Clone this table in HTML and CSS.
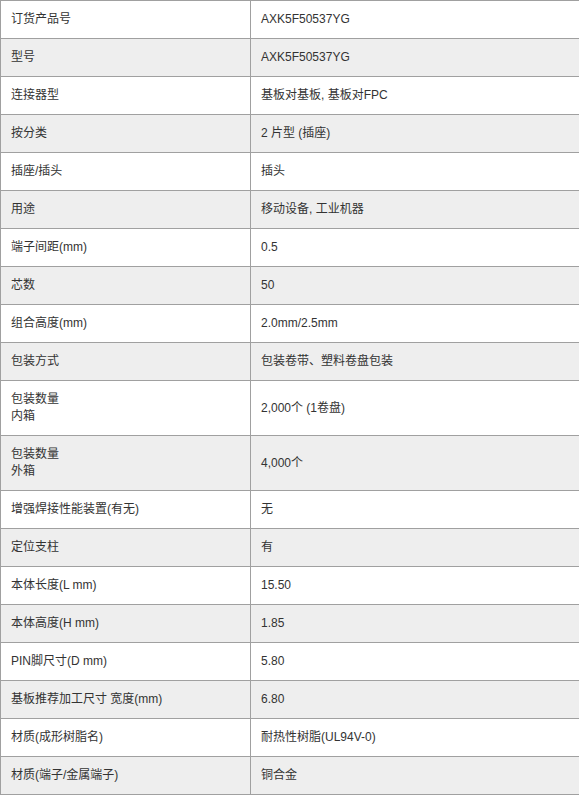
FILE: index.html
```html
<!DOCTYPE html>
<html lang="zh-CN">
<head>
<meta charset="utf-8">
<title>规格</title>
<link rel="stylesheet" href="styles.css">
</head>
<body>
<table class="spec">
  <tbody>
    <tr><td class="k">订货产品号</td><td class="v">AXK5F50537YG</td></tr>
    <tr><td class="k">型号</td><td class="v">AXK5F50537YG</td></tr>
    <tr><td class="k">连接器型</td><td class="v">基板对基板, 基板对FPC</td></tr>
    <tr><td class="k">按分类</td><td class="v">2 片型 (插座)</td></tr>
    <tr><td class="k">插座/插头</td><td class="v">插头</td></tr>
    <tr><td class="k">用途</td><td class="v">移动设备, 工业机器</td></tr>
    <tr><td class="k">端子间距(mm)</td><td class="v">0.5</td></tr>
    <tr><td class="k">芯数</td><td class="v">50</td></tr>
    <tr><td class="k">组合高度(mm)</td><td class="v">2.0mm/2.5mm</td></tr>
    <tr><td class="k">包装方式</td><td class="v">包装卷带、塑料卷盘包装</td></tr>
    <tr><td class="k">包装数量<br>内箱</td><td class="v">2,000个 (1卷盘)</td></tr>
    <tr><td class="k">包装数量<br>外箱</td><td class="v">4,000个</td></tr>
    <tr><td class="k">增强焊接性能装置(有无)</td><td class="v">无</td></tr>
    <tr><td class="k">定位支柱</td><td class="v">有</td></tr>
    <tr><td class="k">本体长度(L mm)</td><td class="v">15.50</td></tr>
    <tr><td class="k">本体高度(H mm)</td><td class="v">1.85</td></tr>
    <tr><td class="k">PIN脚尺寸(D mm)</td><td class="v">5.80</td></tr>
    <tr><td class="k">基板推荐加工尺寸 宽度(mm)</td><td class="v">6.80</td></tr>
    <tr><td class="k">材质(成形树脂名)</td><td class="v">耐热性树脂(UL94V-0)</td></tr>
    <tr><td class="k">材质(端子/金属端子)</td><td class="v">铜合金</td></tr>
  </tbody>
</table>
</body>
</html>
```
FILE: styles.css
```css
html, body {
  margin: 0;
  padding: 0;
  background: #ffffff;
  overflow: hidden;
}

.spec {
  width: 581px;
  table-layout: fixed;
  border-collapse: separate;
  border-spacing: 0;
  border-top: 1px solid #a0a0a0;
  border-left: 1px solid #a0a0a0;
  font-family: "Liberation Sans", "Noto Sans CJK SC", Arial, sans-serif;
  font-size: 12px;
  line-height: 17px;
  color: #333333;
}

.spec td {
  box-sizing: border-box;
  height: 38px;
  padding: 10px;
  border-right: 1px solid #a0a0a0;
  border-bottom: 1px solid #a0a0a0;
  vertical-align: middle;
  text-align: left;
}

.spec td.k {
  width: 250px;
}

.spec tr:nth-child(even) td {
  background: #eeeeee;
}
```
